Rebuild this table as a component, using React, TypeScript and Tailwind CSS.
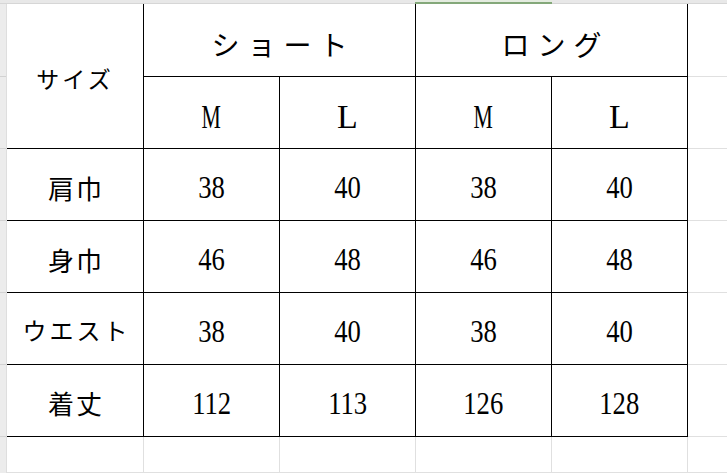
import React from 'react';

const jp = "font-['Noto_Sans_CJK_JP',sans-serif]";
const serif = "font-['Liberation_Serif','Noto_Sans_CJK_JP',serif]";

const rows = [
  { label: '肩巾', size: 'text-[26px] tracking-[2px] pl-[2px] pt-[6px]', values: ['38', '40', '38', '40'] },
  { label: '身巾', size: 'text-[26px] tracking-[2px] pl-[2px] pt-[6px]', values: ['46', '48', '46', '48'] },
  { label: 'ウエスト', size: 'text-[24px] tracking-[3px] pl-[3px] pt-[3px]', values: ['38', '40', '38', '40'] },
  { label: '着丈', size: 'text-[26px] tracking-[2px] pl-[2px] pt-[4px]', values: ['112', '113', '126', '128'] },
];

const cell = 'flex items-center justify-center border-r border-b border-black';

const App: React.FC = () => {
  return (
    <div className="w-[727px] h-[473px] overflow-hidden bg-white text-black flex flex-col">
      {/* column header strip */}
      <div className="h-[4px] shrink-0 flex bg-[#e8e8e8] border-b border-[#d6d6d6]">
        <div className="w-[415px]" />
        <div className="w-[137px] h-[4px] border-b-2 border-[#84a87a] bg-[#e4ece0]" />
      </div>

      <div className="flex flex-1">
        {/* row header strip */}
        <div className="w-[7px] shrink-0 flex flex-col bg-[#ececec] border-r border-[#dedede]">
          <div className="h-[73px] border-b border-[#d2d2d2]" />
          <div className="h-[72px] border-b border-[#d2d2d2]" />
          <div className="h-[72px] border-b border-[#d2d2d2]" />
          <div className="h-[72px] border-b border-[#d2d2d2]" />
          <div className="h-[72px] border-b border-[#d2d2d2]" />
          <div className="h-[72px] border-b border-[#d2d2d2]" />
          <div className="flex-1" />
        </div>

        <div className="flex-1 grid grid-cols-[137px_136px_136px_136px_136px_1fr] grid-rows-[73px_72px_72px_72px_72px_72px_1fr]">
          <div className={`${cell} row-span-2 ${jp} text-[23px] tracking-[3px] leading-none pt-[4px]`}>サイズ</div>
          <div className={`${cell} col-span-2 ${jp} text-[28px] tracking-[8px] pl-[8px] leading-none pt-[8px]`}>ショート</div>
          <div className={`${cell} col-span-2 ${jp} text-[28px] tracking-[8px] pl-[8px] leading-none pt-[8px]`}>ロング</div>
          <div className="border-b border-[#e0e0e0]" />

          {['M', 'L', 'M', 'L'].map((s, i) => (
            <div key={i} className={`${cell} ${serif} text-[34px] leading-none pt-[8px]`}>
              <span className={s === 'M' ? 'inline-block scale-x-[0.64]' : 'inline-block'}>{s}</span>
            </div>
          ))}
          <div className="border-b border-[#e0e0e0]" />

          {rows.map(r => (
            <React.Fragment key={r.label}>
              <div className={`${cell} ${jp} ${r.size} leading-none`}>{r.label}</div>
              {r.values.map((v, i) => (
                <div key={i} className={`${cell} ${serif} text-[31px] leading-none pt-[6px]`}>
                  <span className="inline-block scale-x-[0.86]">{v}</span>
                </div>
              ))}
              <div className="border-b border-[#e0e0e0]" />
            </React.Fragment>
          ))}

          <div className="border-r border-b border-[#e0e0e0]" />
          <div className="border-r border-b border-[#e0e0e0]" />
          <div className="border-r border-b border-[#e0e0e0]" />
          <div className="border-r border-b border-[#e0e0e0]" />
          <div className="border-r border-b border-[#e0e0e0]" />
          <div className="border-b border-[#e0e0e0]" />
        </div>
      </div>
    </div>
  );
};

export default App;
